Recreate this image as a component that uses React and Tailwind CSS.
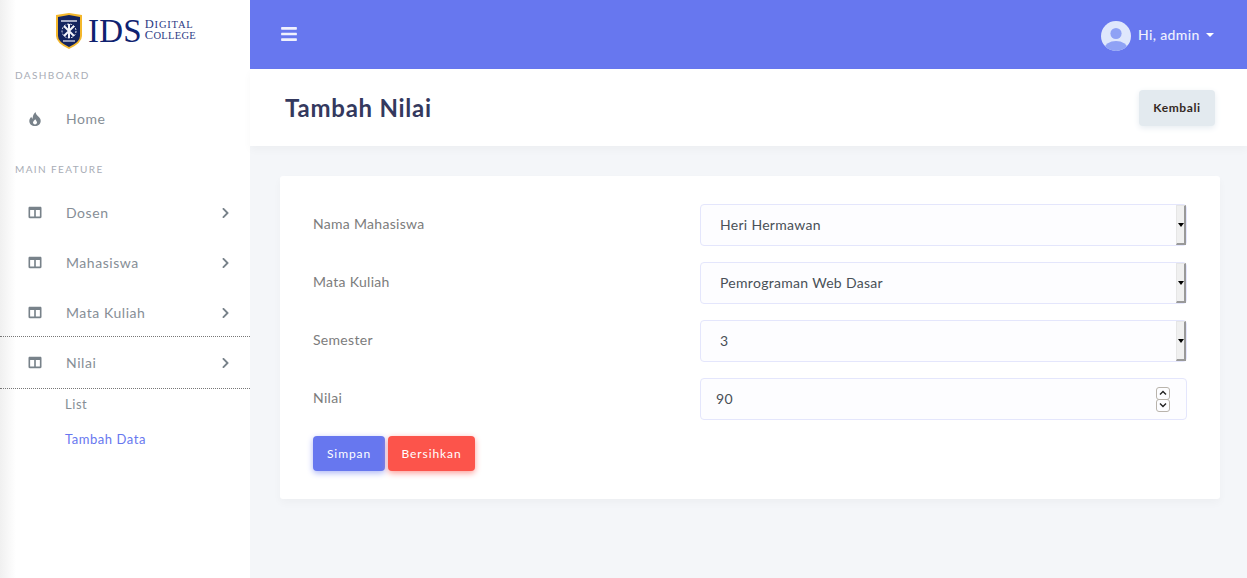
import React from "react";
import { FaColumns, FaChevronRight, FaBars } from "react-icons/fa";

const font = { fontFamily: 'Lato, "Noto Sans", sans-serif' };

function Shield() {
  return (
    <svg width="28" height="38" viewBox="0 0 28 38" className="shrink-0">
      <path d="M1 3 L14 1 L27 3 L27 24 Q27 31 14 37 Q1 31 1 24 Z" fill="#f3b72c" />
      <path d="M3 5 L14 3 L25 5 L25 24 Q25 30 14 35 Q3 30 3 24 Z" fill="#14245f" />
      <circle cx="14" cy="19" r="7" fill="none" stroke="#e8e8f2" strokeWidth="1" strokeDasharray="2 1.4" />
      <path d="M9 14 L19 24 M19 14 L9 24 M14 12 L14 26" stroke="#f4f4fa" strokeWidth="2" />
      <path d="M6 9 L22 9" stroke="#c9cde0" strokeWidth="1.6" />
      <path d="M8 29 L20 29" stroke="#c9cde0" strokeWidth="1.4" />
    </svg>
  );
}

function Fire() {
  return (
    <svg width="12" height="14" viewBox="0 0 12 14" className="ml-px">
      <path
        fillRule="evenodd"
        d="M6.5 0 C6.8 2.2 8.2 3.3 9.6 4.8 C11 6.3 11.7 7.5 11.7 9 C11.7 12 9.2 14 6 14 C2.8 14 0.3 12 0.3 9 C0.3 7.2 1.2 5.8 2.3 4.7 C2.5 5.6 2.9 6.3 3.6 6.8 C3.6 4.2 4.6 1.7 6.5 0 Z M6.2 7.2 C5.6 8.2 4 9.2 4 10.6 C4 11.7 4.9 12.4 6 12.4 C7.1 12.4 8 11.7 8 10.6 C8 9.4 7 8.4 6.2 7.2 Z"
        fill="#78828a"
      />
    </svg>
  );
}

function Logo() {
  return (
    <div className="h-[60px] flex items-start pt-[12px] pl-[55px]">
      <Shield />
      <span
        className="ml-[5px] mt-[1px] text-[33px] leading-[36px] text-[#0f2270] tracking-[0.2px]"
        style={{ fontFamily: '"Liberation Serif", serif' }}
      >
        IDS
      </span>
      <div
        className="ml-[3px] mt-[7px] flex flex-col text-[#2c3a84] leading-[11px]"
        style={{ fontFamily: '"Liberation Serif", serif' }}
      >
        <span className="h-[11px] text-[12.5px] tracking-[0.8px]">
          D<span className="text-[10.5px]">IGITAL</span>
        </span>
        <span className="h-[11px] text-[12.5px] tracking-[0.3px]">
          C<span className="text-[10.5px]">OLLEGE</span>
        </span>
      </div>
    </div>
  );
}

function SectionLabel({ children, top }) {
  return (
    <div className={`${top} mb-[4px] h-[30px] flex items-center pl-[15px] text-[10px] tracking-[1.4px] text-[#a9adb6]`}>
      {children}
    </div>
  );
}

function MenuItem({ icon, label, chevron }) {
  return (
    <div className="h-[50px] flex items-center text-[14px] text-[#868e96] tracking-[0.55px]">
      <div className="w-[66px] pl-[28px] text-[#78828a] flex items-center">{icon}</div>
      <span className="flex-1 -mt-[2px]">{label}</span>
      {chevron && <FaChevronRight className="mr-[20px] text-[#78828a] w-[9px] h-[12px]" />}
    </div>
  );
}

function Sidebar() {
  const col = <FaColumns className="w-[14px] h-[13px] -mt-[1px]" />;
  return (
    <aside className="w-[250px] shrink-0 min-h-[578px] bg-[linear-gradient(to_right,#f0f0f0,#ffffff_16px)]">
      <Logo />
      <SectionLabel top="mt-0">DASHBOARD</SectionLabel>
      <MenuItem icon={<Fire />} label="Home" />
      <SectionLabel top="mt-[10px]">MAIN FEATURE</SectionLabel>
      <MenuItem icon={col} label="Dosen" chevron />
      <MenuItem icon={col} label="Mahasiswa" chevron />
      <MenuItem icon={col} label="Mata Kuliah" chevron />
      <div className="-mt-[2px] border-y border-dotted border-[#777] pt-[1px]">
        <MenuItem icon={col} label="Nilai" chevron />
      </div>
      <div className="pl-[65px] -mt-[2px] text-[13px] tracking-[0.55px]">
        <div className="h-[35px] flex items-center text-[#868e96]">List</div>
        <div className="h-[35px] flex items-center text-[#6777ef]">Tambah Data</div>
      </div>
    </aside>
  );
}

function Avatar() {
  return (
    <svg width="30" height="30" viewBox="0 0 30 30" className="shrink-0 mt-[3px]">
      <defs>
        <clipPath id="av"><circle cx="15" cy="15" r="15" /></clipPath>
      </defs>
      <circle cx="15" cy="15" r="15" fill="#dfe7fc" />
      <g clipPath="url(#av)">
        <ellipse cx="15" cy="28" rx="11.5" ry="8" fill="#8fa2f5" />
      </g>
      <circle cx="15" cy="12.5" r="5.6" fill="#8fa2f5" />
    </svg>
  );
}

function Topbar() {
  return (
    <header className="h-[69px] bg-[#6777ef] flex items-center justify-between pl-[31px] pr-[33px]">
      <FaBars className="text-white/90 w-[16px] h-[18px] -mt-[1px]" />
      <div className="flex items-center text-white/90 text-[14px] font-medium tracking-[0.35px]">
        <Avatar />
        <span className="ml-[7px] w-[61px] whitespace-nowrap">Hi, admin</span>
        <span className="ml-[7px] w-0 h-0 border-x-[4px] border-x-transparent border-t-[4px] border-t-white" />
      </div>
    </header>
  );
}

function FakeSelect({ value }) {
  return (
    <div className="h-[42px] rounded-[4px] border border-[#e4e6fc] bg-[#fdfdff] flex items-center justify-between">
      <span className="pl-[19px] -mt-[2px] text-[14px] tracking-[0.3px] text-[#495057]">{value}</span>
      <div className="w-[10px] h-[40px] bg-[#f0f0f0] border-l border-t border-[#e6e6e6] border-r-2 border-r-[#999] border-b-2 border-b-[#999] flex items-center justify-center">
        <span className="w-0 h-0 border-x-[3px] border-x-transparent border-t-[4px] border-t-black" />
      </div>
    </div>
  );
}

function Spinner() {
  return (
    <div className="flex flex-col mr-[16px]">
      <div className="w-[14px] h-[13px] border border-[#b9b4ac] rounded-[3px] flex items-center justify-center bg-[#fdfdff]">
        <svg width="8" height="6" viewBox="0 0 8 6"><path d="M1 4.5 L4 1.5 L7 4.5" fill="none" stroke="#222" strokeWidth="1.4" /></svg>
      </div>
      <div className="w-[14px] h-[13px] -mt-px border border-[#b9b4ac] rounded-[3px] flex items-center justify-center bg-[#fdfdff]">
        <svg width="8" height="6" viewBox="0 0 8 6"><path d="M1 1.5 L4 4.5 L7 1.5" fill="none" stroke="#222" strokeWidth="1.4" /></svg>
      </div>
    </div>
  );
}

function Row({ label, children }) {
  return (
    <div className="grid grid-cols-[387px_487px] items-center">
      <span className="text-[14px] text-[#7c7c7c] tracking-[0.3px] -mt-[4px]">{label}</span>
      {children}
    </div>
  );
}

function Form() {
  return (
    <div className="mt-[30px] mr-[27px] ml-[30px] h-[323px] bg-white rounded-[3px] pt-[28px] pl-[33px] shadow-[0_4px_8px_rgba(0,0,0,0.03)]">
      <div className="flex flex-col gap-[16px]">
        <Row label="Nama Mahasiswa"><FakeSelect value="Heri Hermawan" /></Row>
        <Row label="Mata Kuliah"><FakeSelect value="Pemrograman Web Dasar" /></Row>
        <Row label="Semester"><FakeSelect value="3" /></Row>
        <Row label="Nilai">
          <div className="h-[42px] rounded-[4px] border border-[#e4e6fc] bg-[#fdfdff] flex items-center justify-between">
            <span className="pl-[15px] -mt-[2px] text-[14px] tracking-[0.3px] text-[#495057]">90</span>
            <Spinner />
          </div>
        </Row>
      </div>
      <div className="mt-[16px] flex gap-[3px] text-white text-[12px] font-normal tracking-[0.9px]">
        <button className="w-[72px] h-[35px] rounded-[4px] bg-[#6777ef] shadow-[0_2px_6px_#acb5f6]">Simpan</button>
        <button className="w-[87px] h-[35px] rounded-[4px] bg-[#fc544b] shadow-[0_2px_6px_#fd9b96]">Bersihkan</button>
      </div>
    </div>
  );
}

export default function App() {
  return (
    <div className="flex min-h-[578px] bg-[#f4f6f9] overflow-hidden" style={font}>
      <Sidebar />
      <main className="flex-1 min-w-0">
        <Topbar />
        <div className="h-[77px] bg-white flex items-center justify-between pl-[35px] pr-[32px] shadow-[0_4px_8px_rgba(0,0,0,0.03)]">
          <h1 className="text-[24px] font-bold tracking-[0.75px] text-[#34395e]">Tambah Nilai</h1>
          <button className="w-[76px] h-[36px] rounded-[4px] bg-[#e3eaef] text-[12px] font-bold tracking-[0.6px] text-[#34291f] shadow-[0_2px_6px_#e6ecf1]">
            Kembali
          </button>
        </div>
        <Form />
      </main>
    </div>
  );
}
